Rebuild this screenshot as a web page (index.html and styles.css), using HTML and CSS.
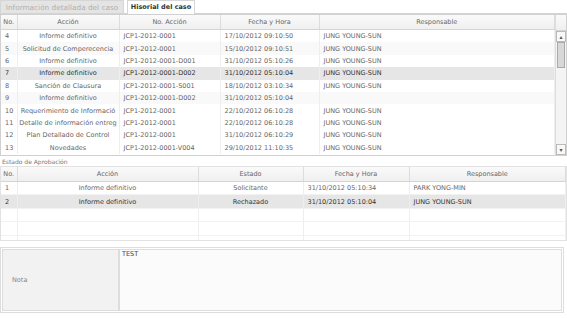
FILE: index.html
```html
<!DOCTYPE html>
<html lang="es">
<head>
    <meta charset="UTF-8">
    <title>Hisorial del caso</title>
    <link rel="stylesheet" href="styles.css">
</head>
<body>
    <div class="tabs">
        <div class="tab">Información detallada del caso</div>
        <div class="tab active">Hisorial del caso</div>
    </div>

    <div class="grid main">
        <div class="grid-body">
            <table>
                <colgroup>
                    <col style="width:16px"><col style="width:102px"><col style="width:101px"><col style="width:99px"><col>
                </colgroup>
                <thead>
                    <tr><th>No.</th><th>Acción</th><th>No. Acción</th><th>Fecha y Hora</th><th>Responsable</th></tr>
                </thead>
                <tbody>
                    <tr><td>4</td><td class="c">Informe definitivo</td><td>JCP1-2012-0001</td><td>17/10/2012 09:10:50</td><td>JUNG YOUNG-SUN</td></tr>
                    <tr class="alt"><td>5</td><td class="c">Solicitud de Comperecencia</td><td>JCP1-2012-0001</td><td>15/10/2012 09:10:51</td><td>JUNG YOUNG-SUN</td></tr>
                    <tr><td>6</td><td class="c">Informe definitivo</td><td>JCP1-2012-0001-D001</td><td>31/10/2012 05:10:26</td><td>JUNG YOUNG-SUN</td></tr>
                    <tr class="sel"><td>7</td><td class="c">Informe definitivo</td><td>JCP1-2012-0001-D002</td><td>31/10/2012 05:10:04</td><td>JUNG YOUNG-SUN</td></tr>
                    <tr><td>8</td><td class="c">Sanción de Clausura</td><td>JCP1-2012-0001-S001</td><td>18/10/2012 03:10:34</td><td>JUNG YOUNG-SUN</td></tr>
                    <tr class="alt"><td>9</td><td class="c">Informe definitivo</td><td>JCP1-2012-0001-D002</td><td>31/10/2012 05:10:04</td><td></td></tr>
                    <tr><td>10</td><td class="c">Requerimiento de Informació</td><td>JCP1-2012-0001</td><td>22/10/2012 06:10:28</td><td>JUNG YOUNG-SUN</td></tr>
                    <tr><td>11</td><td class="c">Detalle de información entreg</td><td>JCP1-2012-0001</td><td>22/10/2012 06:10:28</td><td>JUNG YOUNG-SUN</td></tr>
                    <tr><td>12</td><td class="c">Plan Detallado de Control</td><td>JCP1-2012-0001</td><td>31/10/2012 06:10:29</td><td>JUNG YOUNG-SUN</td></tr>
                    <tr><td>13</td><td class="c">Novedades</td><td>JCP1-2012-0001-V004</td><td>29/10/2012 11:10:35</td><td>JUNG YOUNG-SUN</td></tr>
                </tbody>
            </table>
        </div>
        <div class="scrollbar">
            <div class="sb-head"></div>
            <div class="sb-btn">&#9652;</div>
            <div class="sb-track"><div class="sb-thumb"></div></div>
            <div class="sb-btn">&#9662;</div>
        </div>
    </div>

    <div class="caption">Estado de Aprobación</div>

    <div class="grid approval">
        <table>
            <colgroup>
                <col style="width:16px"><col style="width:181px"><col style="width:105px"><col style="width:106px"><col>
            </colgroup>
            <thead>
                <tr><th>No.</th><th>Acción</th><th>Estado</th><th>Fecha y Hora</th><th>Responsable</th></tr>
            </thead>
            <tbody>
                <tr><td>1</td><td class="c">Informe definitivo</td><td class="c">Solicitante</td><td>31/10/2012 05:10:34</td><td>PARK YONG-MIN</td></tr>
                <tr class="sel"><td>2</td><td class="c">Informe definitivo</td><td class="c">Rechazado</td><td>31/10/2012 05:10:04</td><td>JUNG YOUNG-SUN</td></tr>
                <tr class="empty"><td></td><td></td><td></td><td></td><td></td></tr>
                <tr class="empty"><td></td><td></td><td></td><td></td><td></td></tr>
                <tr class="empty"><td></td><td></td><td></td><td></td><td></td></tr>
            </tbody>
        </table>
    </div>

    <div class="note">
        <div class="note-label">Nota</div>
        <div class="note-text">TEST</div>
    </div>
</body>
</html>
```

FILE: styles.css
```css
body{
    margin: 0;
    width: 567px;
    height: 318px;
    background: #fff;
    font-family: "DejaVu Sans", Verdana, sans-serif;
    font-size: 6.5px;
    color: #555;
    overflow: hidden;
}
.tabs{
    display: flex;
    height: 13px;
    border-bottom: 1px solid #d4d4d4;
    gap: 3px;
}
.tab{
    width: 124px;
    box-sizing: border-box;
    text-align: center;
    line-height: 13px;
    background: #e4e4e4;
    color: #b0b0b0;
    font-size: 7.3px;
    border: 1px solid #d6d6d6;
    border-bottom: none;
    white-space: nowrap;
}
.tab.active{
    width: 68px;
    background: #fff;
    color: #333;
    font-size: 6.5px;
    font-weight: bold;
    height: 14px;
    margin-bottom: -1px;
}
.grid{
    border: 1px solid #d0d0d0;
    box-sizing: border-box;
}
.grid table{
    width: 100%;
    border-collapse: collapse;
    table-layout: fixed;
}
.grid th{
    height: 14px;
    padding: 0;
    background: linear-gradient(#fafafa, #efefef);
    border-right: 1px solid #dcdcdc;
    border-bottom: 1px solid #d4d4d4;
    font-weight: normal;
    color: #666;
    text-align: center;
    white-space: nowrap;
}
.grid td{
    height: 12.4px;
    padding: 0 0 0 4px;
    border-right: 1px solid #eee;
    white-space: nowrap;
    overflow: hidden;
    color: #666;
}
.grid td.c{
    text-align: center;
    padding: 0;
}
.grid tr.alt td{
    background: #f9f9f9;
}
.grid tr.sel td{
    background: #e6e6e6;
    color: #333;
}
.main{
    display: flex;
    height: 142px;
}
.grid-body{
    flex: 1;
    overflow: hidden;
}
.scrollbar{
    width: 10px;
    display: flex;
    flex-direction: column;
    background: #f4f4f4;
    border-left: 1px solid #ddd;
}
.sb-head{
    height: 15px;
    background: linear-gradient(#fafafa, #efefef);
    border-bottom: 1px solid #d4d4d4;
}
.sb-btn{
    height: 9px;
    font-size: 6px;
    line-height: 9px;
    text-align: center;
    color: #555;
    border: 1px solid #bbb;
    background: #f8f8f8;
}
.sb-track{
    flex: 1;
    padding: 0 1px;
}
.sb-thumb{
    height: 24px;
    background: #d8d8d8;
    border: 1px solid #aaa;
}
.caption{
    padding: 2px 2px 0;
    height: 8px;
    line-height: 8px;
    color: #777;
    font-size: 6px;
}
.approval{
    height: 75px;
    overflow: hidden;
    border-color: #e2e2e2;
}
.approval td{
    border-bottom: 1px solid #f2f2f2;
}
.note{
    display: flex;
    margin: 6px 3px 0 0;
    height: 66px;
    border: 1px solid #ddd;
    padding: 1px;
    box-sizing: border-box;
}
.note-label{
    width: 117px;
    box-sizing: border-box;
    background: #f2f2f2;
    border: 1px solid #ddd;
    display: flex;
    align-items: center;
    padding-left: 9px;
    color: #888;
}
.note-text{
    flex: 1;
    border: 1px solid #ddd;
    background: #fbfbfb;
    color: #444;
    padding: 0 2px;
    line-height: 8px;
}
```
